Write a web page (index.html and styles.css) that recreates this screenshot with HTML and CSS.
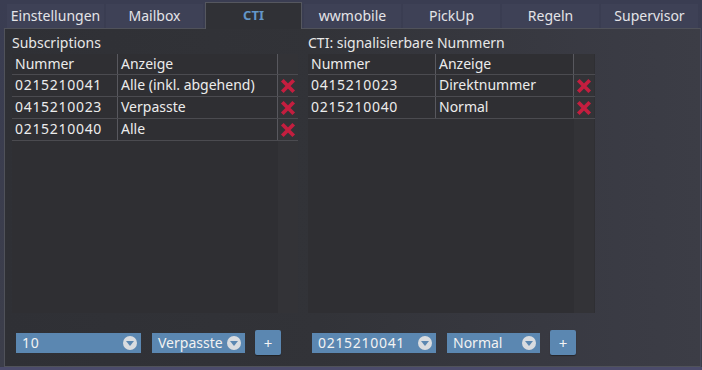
FILE: index.html
```html
<!DOCTYPE html>
<html lang="de">
<head>
    <meta charset="UTF-8">
    <meta name="viewport" content="width=device-width, initial-scale=1.0">
    <title>CTI</title>
    <link rel="stylesheet" href="styles.css">
</head>
<body>
    <nav class="tabs">
        <div class="tab">Einstellungen</div>
        <div class="tab">Mailbox</div>
        <div class="tab active">CTI</div>
        <div class="tab">wwmobile</div>
        <div class="tab">PickUp</div>
        <div class="tab">Regeln</div>
        <div class="tab">Supervisor</div>
    </nav>

    <main class="panel">
        <section class="column left">
            <h2 class="title">Subscriptions</h2>
            <div class="table-box">
                <div class="row head">
                    <div class="cell num">Nummer</div>
                    <div class="cell label">Anzeige</div>
                    <div class="cell del"></div>
                </div>
                <div class="row">
                    <div class="cell num digits">0215210041</div>
                    <div class="cell label">Alle (inkl. abgehend)</div>
                    <div class="cell del"><svg viewBox="0 0 14 14"><path d="M2 2 L12 12 M12 2 L2 12"/></svg></div>
                </div>
                <div class="row">
                    <div class="cell num digits">0415210023</div>
                    <div class="cell label">Verpasste</div>
                    <div class="cell del"><svg viewBox="0 0 14 14"><path d="M2 2 L12 12 M12 2 L2 12"/></svg></div>
                </div>
                <div class="row">
                    <div class="cell num digits">0215210040</div>
                    <div class="cell label">Alle</div>
                    <div class="cell del"><svg viewBox="0 0 14 14"><path d="M2 2 L12 12 M12 2 L2 12"/></svg></div>
                </div>
                <div class="filler">
                    <div class="cell num"></div>
                    <div class="cell label"></div>
                    <div class="cell del"></div>
                </div>
            </div>
            <div class="controls">
                <div class="select wide"><span class="digits">10</span><i class="chev"></i></div>
                <div class="select narrow"><span>Verpasste</span><i class="chev"></i></div>
                <button class="add">+</button>
            </div>
        </section>

        <section class="column right">
            <h2 class="title">CTI: signalisierbare Nummern</h2>
            <div class="table-box">
                <div class="row head">
                    <div class="cell num">Nummer</div>
                    <div class="cell label">Anzeige</div>
                    <div class="cell del"></div>
                </div>
                <div class="row">
                    <div class="cell num digits">0415210023</div>
                    <div class="cell label">Direktnummer</div>
                    <div class="cell del"><svg viewBox="0 0 14 14"><path d="M2 2 L12 12 M12 2 L2 12"/></svg></div>
                </div>
                <div class="row">
                    <div class="cell num digits">0215210040</div>
                    <div class="cell label">Normal</div>
                    <div class="cell del"><svg viewBox="0 0 14 14"><path d="M2 2 L12 12 M12 2 L2 12"/></svg></div>
                </div>
                <div class="filler">
                    <div class="cell num"></div>
                    <div class="cell label"></div>
                    <div class="cell del"></div>
                </div>
            </div>
            <div class="controls">
                <div class="select wide"><span class="digits">0215210041</span><i class="chev"></i></div>
                <div class="select narrow"><span>Normal</span><i class="chev"></i></div>
                <button class="add">+</button>
            </div>
        </section>
    </main>
</body>
</html>
```

FILE: styles.css
```css
* {
    margin: 0;
    padding: 0;
    box-sizing: border-box;
    font-family: "Noto Sans", sans-serif;
}
body {
    width: 702px;
    height: 370px;
    overflow: hidden;
    background: linear-gradient(#3a3d52, #3c3e4a);
    color: #e6e6e6;
    font-size: 14px;
    position: relative;
}
body:after {
    content: '';
    position: absolute;
    left: 0;
    right: 0;
    bottom: 0;
    height: 3px;
    background-color: #4b4b6b;
}
.digits {
    letter-spacing: 0.7px;
}

/* tab bar */
.tabs {
    display: flex;
    gap: 2px;
    height: 28px;
    padding-left: 7px;
}
.tab {
    width: 97px;
    height: 24px;
    margin-top: 4px;
    line-height: 24px;
    text-align: center;
    font-size: 14px;
    white-space: nowrap;
    color: #e4e4e8;
    background-color: #3e4156;
}
.tab.active {
    margin-top: 2px;
    height: 27px;
    line-height: 25px;
    color: #6396c8;
    font-weight: bold;
    font-size: 13px;
    background-color: #303136;
    border: 1px solid #55575f;
    border-bottom: none;
    position: relative;
    z-index: 1;
}

/* main panel */
.panel {
    display: flex;
    gap: 10px;
    margin-left: 4px;
    width: 697px;
    height: 339px;
    padding: 4px 0 0 7px;
    background: linear-gradient(to right, #2f3035 0%, #323338 45%, #3a3b44 88%, #3c3d46 100%);
    border: 1px solid #50525a;
    border-right-color: #46485a;
    position: relative;
    z-index: 0;
}
.column {
    display: flex;
    flex-direction: column;
    width: 287px;
}
.column.left {
    width: 286px;
}
.title {
    font-size: 14px;
    font-weight: normal;
    height: 21px;
    line-height: 19px;
    color: #e8e8e8;
}

/* tables */
.table-box {
    height: 259px;
    display: flex;
    flex-direction: column;
    background-color: #2f2f33;
}
.row {
    display: flex;
    height: 22px;
    border-bottom: 1px solid #4b4b50;
}
.row.head {
    height: 21px;
}
.filler {
    display: flex;
    flex: 1;
}
.cell {
    padding-left: 3px;
    line-height: 20px;
    white-space: nowrap;
    color: #ececec;
    border-right: 1px solid #58585e;
}
.filler .cell {
    border-right-color: transparent;
}
.cell.del {
    border-right: none;
    display: flex;
    align-items: center;
    justify-content: center;
    padding-left: 0;
    background-color: #333337;
}
.left .num { width: 106px; }
.left .label { width: 160px; }
.right .num { width: 128px; }
.right .label { width: 138px; }
.del { width: 20px; }
.del svg {
    width: 16px;
    height: 16px;
    fill: none;
    stroke: #c41e3f;
    stroke-width: 3.3;
}

/* controls */
.controls {
    display: flex;
    align-items: center;
    gap: 10px;
    margin-top: 17px;
    padding-left: 4px;
}
.select {
    height: 20px;
    display: flex;
    align-items: center;
    justify-content: space-between;
    padding: 0 4px 0 6px;
    background-color: #5b87b1;
    color: #f2f2f2;
    font-size: 14px;
}
.left .select.wide { width: 125px; }
.right .select.wide { width: 124px; }
.select.narrow { width: 93px; margin-left: 1px; }
.chev {
    width: 14px;
    height: 14px;
    border-radius: 50%;
    background-color: #d9dce0;
    position: relative;
}
.chev:after {
    content: '';
    position: absolute;
    left: 3px;
    top: 5px;
    border-left: 4px solid transparent;
    border-right: 4px solid transparent;
    border-top: 5px solid #5b87b1;
}
.add {
    width: 26px;
    height: 25px;
    border: none;
    border-radius: 2px;
    background-color: #5b87b1;
    color: #f4f4f4;
    font-size: 15px;
    box-shadow: 0 1px 1px rgba(0,0,0,0.35);
}
```
